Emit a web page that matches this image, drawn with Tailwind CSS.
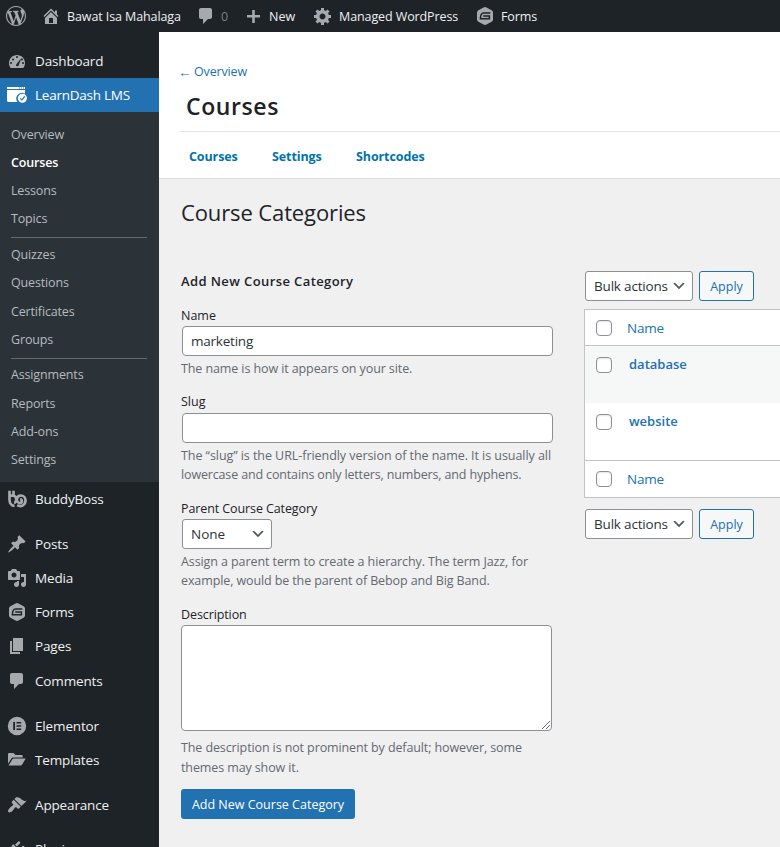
<!DOCTYPE html>
<html lang="en">
<head>
<meta charset="utf-8">
<title>Course Categories</title>
<script src="https://cdn.jsdelivr.net/npm/@tailwindcss/browser@4"></script>
</head>
<body class="bg-[#f0f0f1] font-['Open_Sans','Noto_Sans',sans-serif] text-[#3c434a] text-[12.5px] w-[780px] h-[847px] overflow-hidden">
<svg class="hidden">
  <symbol id="comment" viewBox="0 0 20 20"><path d="M5 2h9c1.100 0 2 .9 2 2v7c0 1.100-.9 2-2 2h-2l-5 5v-5H5c-1.100 0-2-.9-2-2V4c0-1.100.9-2 2-2z"/></symbol>
  <symbol id="gform" viewBox="0 0 20 20"><path d="M10 1l1.500.400 5.500 3.200 1 1.400v8l-1 1.400-5.500 3.200L10 19l-1.500-.400L3 15.400 2 14V6l1-1.400 5.500-3.200z"/><path d="M15.300 7H8.500C6.300 7 5.500 9.200 5.400 12.800h9V10H8.200" fill="none" stroke="#1d2327" stroke-width="1.500"/></symbol>
  <symbol id="chev" viewBox="0 0 20 20"><path d="M5 6l5 5 5-5 2 1-7 7-7-7z" fill="#50575e"/></symbol>
</svg>

<header class="flex items-center h-8 bg-[#1d2327] text-[#f0f0f1] text-[12.5px] leading-[33px] fill-[#a7aaad]">
  <svg class="ml-1.5 size-5" viewBox="0 0 20 20"><path d="M20 10c0-5.51-4.49-10-10-10C4.48 0 0 4.49 0 10c0 5.520 4.480 10 10 10 5.510 0 10-4.480 10-10zM7.780 15.370L4.370 6.220c.55-.02 1.170-.08 1.170-.08.5-.06.44-1.130-.06-1.110 0 0-1.450.11-2.370.11-.18 0-.37 0-.58-.01C4.120 2.690 6.870 1.110 10 1.110c2.330 0 4.450.87 6.050 2.340-.68-.11-1.650.39-1.650 1.580 0 .74.45 1.360.9 2.100.35.61.55 1.360.55 2.460 0 1.490-1.400 5-1.400 5l-3.030-8.370c.54-.02.82-.17.82-.17.5-.05.44-1.250-.06-1.220 0 0-1.440.12-2.380.12-.87 0-2.330-.12-2.330-.12-.5-.03-.56 1.200-.06 1.220l.92.080 1.260 3.410zM17.410 10c.24-.64.74-1.870.43-4.250.7 1.290 1.050 2.710 1.050 4.250 0 3.290-1.730 6.240-4.400 7.780.97-2.590 1.940-5.200 2.920-7.780zM6.100 18.090C3.120 16.650 1.110 13.530 1.110 10c0-1.300.23-2.480.72-3.590C3.250 10.300 4.670 14.200 6.100 18.090zm4.030-6.630l2.580 6.980c-.86.29-1.760.45-2.710.45-.79 0-1.570-.11-2.290-.33.81-2.380 1.620-4.740 2.420-7.100z"/></svg>
  <svg class="ml-[15px] size-5" viewBox="0 0 20 20"><path fill-rule="evenodd" d="M16 8.500l1.530 1.530-1.060 1.060L10 4.600l-6.470 6.490-1.060-1.060L10 2.500l4 4v-2h2v4zm-6-2.460l6 5.990V18H4v-5.970zM12 17v-5H8v5h4z"/></svg>
  <span class="ml-1.5 w-[115px] whitespace-nowrap tracking-[-0.1px]">Bawat Isa Mahalaga</span>
  <svg class="ml-[14px] size-5"><use href="#comment"/></svg>
  <span class="ml-[5px] w-[10px] text-[#a7aaad]/70">0</span>
  <svg class="ml-[12px] size-5" viewBox="0 0 20 20"><path d="M17 9v2.600h-5.200V17H9.200v-5.400H4V9h5.200V4h2.600v5z"/></svg>
  <span class="ml-[6px] w-[28px]">New</span>
  <svg class="ml-[16px] size-5" viewBox="0 0 20 20"><path fill-rule="evenodd" d="M18 12h-2.180c-.17.7-.44 1.350-.81 1.930l1.540 1.540-2.100 2.100-1.540-1.540c-.58.36-1.230.63-1.910.79V19H8v-2.180c-.68-.16-1.330-.43-1.910-.79l-1.540 1.540-2.120-2.120 1.540-1.540c-.36-.58-.63-1.230-.79-1.910H1V9.030h2.170c.16-.7.44-1.350.8-1.940L2.430 5.550l2.100-2.100 1.540 1.540c.58-.37 1.240-.64 1.930-.81V2h3v2.180c.68.16 1.330.43 1.910.79l1.540-1.540 2.120 2.120-1.540 1.540c.36.59.64 1.240.8 1.940H18V12zm-8.500 1.500c1.660 0 3-1.340 3-3s-1.340-3-3-3-3 1.340-3 3 1.340 3 3 3z"/></svg>
  <span class="ml-1.5 w-[120px] whitespace-nowrap tracking-[-0.1px]">Managed WordPress</span>
  <svg class="ml-[16px] size-5"><use href="#gform"/></svg>
  <span class="ml-1.5 tracking-[-0.1px]">Forms</span>
</header>

<div class="flex h-[815px]">
  <nav class="w-[159px] shrink-0 bg-[#1d2327] pt-3 text-[13.500px] tracking-[-0.15px] text-[#f0f0f1] fill-[#a7aaad]">
    <a class="flex items-center h-[34px] pl-[7px] gap-2"><svg class="size-5" viewBox="0 0 20 20"><path fill-rule="evenodd" d="M3.760 17h12.480C17.340 15.630 18 13.890 18 12c0-4.410-3.580-8-8-8s-8 3.590-8 8c0 1.890.66 3.630 1.760 5zM9 6a1 1 0 1 1 2 0a1 1 0 1 1-2 0zM5 8.500a1 1 0 1 1 2 0a1 1 0 1 1-2 0zM13.300 8.200l.500.200-2.100 5.900c-.300 1.300-2.300 1.300-2.600.200-.200-.600 0-1.100.500-1.500zM3 12a1 1 0 1 1 2 0a1 1 0 1 1-2 0zM15 12a1 1 0 1 1 2 0a1 1 0 1 1-2 0zM14.100 8a.9.900 0 1 1 1.500.900a.9.900 0 1 1-1.500-.900z"/></svg>Dashboard</a>
    <a class="flex items-center h-[34px] pl-[7px] gap-2 bg-[#2271b1] text-white tracking-[-0.25px]"><svg class="size-5" viewBox="0 0 20 20"><path fill="#fff" d="M0 2h18v2H0zM0 5h18v3.800a5.600 5.600 0 0 0-7.400 8.200H1.500A1.500 1.500 0 0 1 0 15.500z"/><path d="M12 3h1M14 3h1M16 3h1" stroke="#2271b1"/><circle cx="15.400" cy="13.200" r="4.500" fill="#fff"/><path d="M13.300 13.300l1.600 1.600 2.900-3.500" fill="none" stroke="#2271b1" stroke-width="1.200"/></svg>LearnDash LMS</a>
    <div class="h-[370px] bg-[#2c3338] pt-[8.600px] pl-[11px] pr-3 text-[12.500px] text-[#b5bbbf] leading-[28.200px]">
      <div>Overview</div><div class="font-semibold text-white">Courses</div><div>Lessons</div><div>Topics</div>
      <hr class="border-[#646970] mt-[3.600px] mb-[3.200px]">
      <div>Quizzes</div><div>Questions</div><div>Certificates</div><div>Groups</div>
      <hr class="border-[#646970] mt-[3.900px] mb-[2.600px]">
      <div>Assignments</div><div>Reports</div><div>Add-ons</div><div>Settings</div>
    </div>
    <a class="flex items-center h-[34.200px] pl-[7px] gap-2"><svg class="size-5" viewBox="0 0 20 20" fill="none" stroke="#a7aaad" stroke-width="2.700"><path d="M2.500 1.800v8.700c0 4 2.300 6.400 5 6.400M6.500 1.800v4M2.300 6.700h4.500c3.300.800 3.200 7 .2 7M10.200 16.200c4 2.400 8.300-.6 8.300-4.700 0-3-2-5-4.500-5-5.300 0-5.300 7.500-1.200 7.500 2.700 0 2.700-3.700.3-3.700"/></svg>BuddyBoss</a>
    <div class="h-[10.600px]"></div>
    <a class="flex items-center h-[34.200px] pl-[7px] gap-2"><svg class="size-5" viewBox="0 0 20 20"><path d="M10.440 3.020l1.820-1.820 6.360 6.350-1.830 1.820c-1.050-.68-2.480-.57-3.410.36l-.75.75c-.92.93-1.040 2.350-.35 3.410l-1.830 1.820-2.410-2.410-2.800 2.790c-.42.42-3.380 2.710-3.800 2.290s1.860-3.390 2.280-3.810l2.790-2.790L4.100 9.360l1.830-1.820c1.050.69 2.480.57 3.400-.36l.75-.75c.93-.92 1.050-2.350.36-3.410z"/></svg>Posts</a>
    <a class="flex items-center h-[34.200px] pl-[7px] gap-2"><svg class="size-5" viewBox="0 0 20 20"><path fill-rule="evenodd" d="M13 11V4c0-.55-.45-1-1-1h-1.670L9 1H5L3.670 3H2c-.55 0-1 .45-1 1v7c0 .55.45 1 1 1h10c.55 0 1-.45 1-1zM7 4.500c1.380 0 2.500 1.120 2.500 2.500S8.380 9.500 7 9.500 4.500 8.380 4.500 7 5.620 4.500 7 4.500zM14 6h5v10.500c0 1.380-1.120 2.500-2.500 2.500S14 17.880 14 16.500s1.120-2.500 2.500-2.500c.17 0 .34.02.5.05V9h-3V6zm-4 8.050V13h2v3.500c0 1.380-1.120 2.500-2.500 2.500S7 17.880 7 16.500 8.120 14 9.500 14c.17 0 .34.02.5.05z"/></svg>Media</a>
    <a class="flex items-center h-[34.200px] pl-[7px] gap-2"><svg class="size-5"><use href="#gform"/></svg>Forms</a>
    <a class="flex items-center h-[34.200px] pl-[7px] gap-2"><svg class="size-5" viewBox="0 0 20 20"><path d="M6 15V2h10v13H6zm-1 1h8v2H3V5h2v11z"/></svg>Pages</a>
    <a class="flex items-center h-[34.200px] pl-[7px] gap-2"><svg class="size-5"><use href="#comment"/></svg>Comments</a>
    <div class="h-[11px]"></div>
    <a class="flex items-center h-[34.200px] pl-[7px] gap-2"><svg class="size-5" viewBox="0 0 20 20"><path fill-rule="evenodd" d="M10 .8a9.200 9.200 0 1 1 0 18.400A9.200 9.200 0 0 1 10 .8zM6.200 6v8H8V6zM9.500 6v1.500h4.700V6zM9.500 9.250v1.500h4.700v-1.500zM9.500 12.500V14h4.700v-1.500z"/></svg>Elementor</a>
    <a class="flex items-center h-[34.200px] pl-[7px] gap-2"><svg class="size-5" viewBox="0 0 20 20"><path d="M1 4.200C1 3.500 1.500 3 2.200 3h4.300l2 2h6c.700 0 1.200.500 1.200 1.200V7.500H6.300c-.900 0-1.700.500-2.100 1.200L1 13.800zM1.500 15.500l3.800-6c.300-.600.700-.900 1.400-.900h12l-3.600 6c-.400.600-.800.900-1.500.900z"/></svg>Templates</a>
    <div class="h-[11px]"></div>
    <a class="flex items-center h-[34.200px] pl-[7px] gap-2"><svg class="size-5" viewBox="0 0 20 20"><path d="M14.480 11.060L7.410 3.990l1.500-1.500c.5-.56 2.300-.47 3.510.32 1.210.8 1.430 1.280 2.910 2.100 1.180.64 2.450 1.260 4.450.85zm-.71.71L6.700 4.700 4.930 6.470c-.39.39-.39 1.020 0 1.410l1.060 1.060c.39.39.39 1.030 0 1.420-.6.6-1.430 1.110-2.210 1.690-.35.26-.7.53-1.010.84C1.430 14.230.4 16.080 1.400 17.070c.99 1 2.840-.03 4.180-1.360.31-.31.58-.66.85-1.020.57-.78 1.080-1.610 1.690-2.210.39-.39 1.020-.39 1.410 0l1.060 1.060c.39.39 1.020.39 1.410 0z"/></svg>Appearance</a>
    <div class="h-[10px]"></div>
    <a class="flex items-center h-[34.200px] pl-[7px] gap-2"><svg class="size-5" viewBox="0 0 20 20"><path d="M13.110 4.360L9.870 7.600 8 5.730l3.240-3.240c.35-.34 1.050-.2 1.560.32.52.51.66 1.210.31 1.550zm-8 1.770l.91-1.120 9.010 9.010-1.190.84c-.71.71-2.630 1.160-3.820 1.160H6.140L4.900 17.260c-.59.59-1.540.59-2.120 0-.59-.58-.59-1.530 0-2.120l1.240-1.240v-3.880c0-1.130.4-3.190 1.090-3.890zm7.260 3.970l3.240-3.240c.34-.35 1.040-.21 1.550.31.52.51.66 1.210.31 1.550l-3.240 3.250z"/></svg>Plugins</a>
  </nav>

  <main class="flex-1 min-w-0">
    <div class="h-[147px] bg-white border-b border-[#dcdcde] pl-5">
      <div class="h-[100px] border-b border-[#e2e4e7] pt-[30px]">
        <a class="flex h-5 leading-5 tracking-[-0.15px] text-[#2271b1]"><span class="-ml-px w-[16px] text-[13.500px]">←</span>Overview</a>
        <h1 class="mt-[8px] ml-[7px] text-[23px] leading-8 font-semibold tracking-[0.600px] text-[#1d2327]">Courses</h1>
      </div>
      <div class="flex pl-2.5 leading-[49px] tracking-[-0.1px] font-bold text-[#0073aa]"><a class="w-[83px]">Courses</a><a class="w-[84px]">Settings</a><a>Shortcodes</a></div>
    </div>
    <div class="pl-[22px]">
      <h2 class="pt-[17px] text-[22px] leading-8 tracking-[-0.12px] text-[#1d2327]">Course Categories</h2>
      <div class="flex">
        <form class="w-[403px] shrink-0 pt-[43px]">
          <h3 class="text-[13px] leading-5 font-semibold tracking-[0.400px] text-[#1d2327]">Add New Course Category</h3>
          <label class="block mt-[15px] h-5 leading-5 text-[#1d2327]">Name</label>
          <div class="ml-px w-[371px] h-[30px] rounded border border-[#8c8f94] bg-white px-2 leading-[29px] text-[13.500px] tracking-[-0.22px] text-[#2c3338]">marketing</div>
          <p class="mt-[3px] leading-[19.500px] tracking-[-0.1px] text-[#646970] whitespace-nowrap">The name is how it appears on your site.</p>
          <label class="block mt-[13px] h-[21px] leading-5 text-[#1d2327]">Slug</label>
          <div class="ml-px w-[371px] h-[30px] rounded border border-[#8c8f94] bg-white"></div>
          <p class="mt-[3px] leading-[19.500px] text-[#646970] whitespace-nowrap"><span class="tracking-[-0.055px]">The “slug” is the URL-friendly version of the name. It is usually all</span><br><span class="tracking-[-0.15px]">lowercase and contains only letters, numbers, and hyphens.</span></p>
          <label class="block mt-[14px] h-5 leading-5 tracking-[-0.1px] text-[#1d2327]">Parent Course Category</label>
          <div class="ml-px flex items-center justify-between w-[90px] h-[30px] rounded-[3px] border border-[#8c8f94] bg-white pl-2 pr-[5px] text-[13.500px] text-[#2c3338]"><span class="pt-px">None</span><svg class="size-4"><use href="#chev"/></svg></div>
          <p class="mt-[3px] leading-[19.500px] text-[#646970] whitespace-nowrap"><span class="tracking-[-0.09px]">Assign a parent term to create a hierarchy. The term Jazz, for</span><br><span class="tracking-[-0.110px]">example, would be the parent of Bebop and Big Band.</span></p>
          <label class="block mt-[14px] h-5 leading-5 tracking-[-0.1px] text-[#1d2327]">Description</label>
          <div class="flex items-end justify-end w-[371px] h-[106px] rounded border border-[#8c8f94] bg-white"><svg class="size-[10px]" viewBox="0 0 10 10" stroke="#3c434a" stroke-width=".8"><path d="M1 9l8-8M5 9l4-4"/></svg></div>
          <p class="mt-[7px] leading-5 tracking-[-0.11px] text-[#646970] whitespace-nowrap">The description is not prominent by default; however, some<br>themes may show it.</p>
          <div class="mt-[11px] w-[174px] h-[30px] rounded-[3px] bg-[#2271b1] text-center text-white leading-[31px]">Add New Course Category</div>
        </form>
        <section class="flex-1 min-w-0 pt-[43px]">
          <div class="flex gap-1.5 pl-px mb-2">
            <div class="flex items-center justify-between w-[108px] h-[30px] rounded-[3px] border border-[#8c8f94] bg-white pl-2 pr-[5px] text-[13.500px] tracking-[-0.18px] text-[#2c3338] whitespace-nowrap">Bulk actions<svg class="size-4"><use href="#chev"/></svg></div>
            <div class="w-[55px] h-[30px] rounded-[3px] border border-[#2271b1] bg-[#f6f7f7] text-center text-[#2271b1] leading-[29px]">Apply</div>
          </div>
          <div class="h-[189px] border border-r-0 border-[#c3c4c7] bg-white text-[#2271b1]">
            <div class="flex items-center h-9 pl-[11px] gap-[15px] border-b border-[#c3c4c7] text-[13.500px] tracking-[-0.2px]"><i class="size-4 rounded border border-[#8c8f94] bg-white shadow-[inset_0_1px_2px_#0000001a]"></i><span class="pt-px">Name</span></div>
            <div class="flex h-[57px] pt-[11px] pl-[11px] gap-[17px] bg-[#f6f7f7] font-semibold text-[13px] leading-[14px]"><i class="size-4 rounded border border-[#8c8f94] bg-white shadow-[inset_0_1px_2px_#0000001a]"></i>database</div>
            <div class="flex h-[57px] pt-[11px] pl-[11px] gap-[17px] font-semibold text-[13px] leading-[14px]"><i class="size-4 rounded border border-[#8c8f94] bg-white shadow-[inset_0_1px_2px_#0000001a]"></i>website</div>
            <div class="flex items-center h-[37px] pl-[11px] gap-[15px] border-t border-[#c3c4c7] text-[13.500px] tracking-[-0.2px]"><i class="size-4 rounded border border-[#8c8f94] bg-white shadow-[inset_0_1px_2px_#0000001a]"></i>Name</div>
          </div>
          <div class="flex gap-1.5 pl-px mt-[11px]">
            <div class="flex items-center justify-between w-[108px] h-[30px] rounded-[3px] border border-[#8c8f94] bg-white pl-2 pr-[5px] text-[13.500px] tracking-[-0.18px] text-[#2c3338] whitespace-nowrap">Bulk actions<svg class="size-4"><use href="#chev"/></svg></div>
            <div class="w-[55px] h-[30px] rounded-[3px] border border-[#2271b1] bg-[#f6f7f7] text-center text-[#2271b1] leading-[29px]">Apply</div>
          </div>
        </section>
      </div>
    </div>
  </main>
</div>
</body>
</html>
